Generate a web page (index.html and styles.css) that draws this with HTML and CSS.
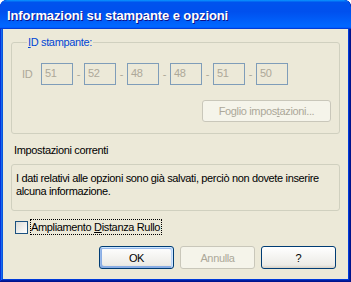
FILE: index.html
```html
<!DOCTYPE html>
<html>
<head>
<meta charset="utf-8">
<link rel="stylesheet" href="styles.css">
</head>
<body>
<div class="window">
  <div class="titlebar"><span class="title">Informazioni su stampante e opzioni</span></div>
  <div class="client">
    <fieldset class="group">
      <legend class="legend"><u>I</u>D stampante:</legend>
      <div class="idrow">
        <span class="idlabel">ID</span>
        <span class="edit">51</span><span class="sep">-</span>
        <span class="edit">52</span><span class="sep">-</span>
        <span class="edit">48</span><span class="sep">-</span>
        <span class="edit">48</span><span class="sep">-</span>
        <span class="edit">51</span><span class="sep">-</span>
        <span class="edit">50</span>
      </div>
      <div class="btnrow-right">
        <button class="btn btn-disabled btn-wide" disabled>Foglio impos<u>t</u>azioni...</button>
      </div>
    </fieldset>
    <div class="section-label">Impostazioni correnti</div>
    <div class="infobox">I dati relativi alle opzioni sono già salvati, perciò non dovete inserire alcuna informazione.</div>
    <div class="checkrow">
      <span class="checkbox"></span>
      <span class="checklabel">Ampliamento <u>D</u>istanza Rullo</span>
    </div>
    <div class="buttons">
      <button class="btn btn-default">OK</button>
      <button class="btn btn-disabled" disabled>Annulla</button>
      <button class="btn">?</button>
    </div>
  </div>
</div>
</body>
</html>
```
FILE: styles.css
```css
html, body {
  margin: 0;
  padding: 0;
  background: #ffffff;
}
body {
  font-family: "Liberation Sans", Arial, sans-serif;
  font-size: 11px;
  line-height: 13px;
  letter-spacing: -0.35px;
  color: #000000;
}
.window {
  width: 351px;
  height: 282px;
  display: flex;
  flex-direction: column;
  background: #0855dd;
  border-radius: 7px 7px 0 0;
  overflow: hidden;
  box-shadow: inset -1px -1px #00138c, inset 1px 1px #0831d9, inset -2px -2px #001ea0, inset 2px 2px #166aee, inset -3px -3px #003bda, inset 3px 3px #0855dd;
}
.titlebar {
  flex: none;
  height: 29px;
  display: flex;
  align-items: center;
  padding-left: 7px;
  background: linear-gradient(180deg, #0997ff, #0053ee 8%, #0050ee 40%, #0066ff 88%, #0066ff 93%, #005bff 95%, #003dd7 96%, #003dd7);
  border-radius: 7px 7px 0 0;
}
.title {
  font-family: "Liberation Sans", Arial, sans-serif;
  font-weight: bold;
  font-size: 13px;
  letter-spacing: -0.1px;
  color: #ffffff;
  text-shadow: 1px 1px #0f1089;
  padding-top: 1px;
}
.client {
  flex: 1;
  margin: 0 3px 3px;
  background: #ece9d8;
  padding: 7px 8px 0;
  display: flex;
  flex-direction: column;
}
.group {
  margin: 0;
  padding: 14px 8px 11px 10px;
  border: 1px solid #d0d0bf;
  border-radius: 3px;
  display: flex;
  flex-direction: column;
}
.legend {
  padding: 0 1px;
  margin-left: 5px;
  color: #0046d5;
}
.idrow {
  display: flex;
  align-items: center;
  color: #aca899;
}
.idlabel {
  width: 19px;
}
.edit {
  box-sizing: border-box;
  width: 32px;
  height: 22px;
  border: 1px solid #7f9db9;
  padding: 3px 0 0 3px;
  color: #aca899;
}
.sep {
  width: 11px;
  text-align: center;
}
.btnrow-right {
  display: flex;
  justify-content: flex-end;
  margin-top: 15px;
}
.btn {
  box-sizing: border-box;
  width: 75px;
  height: 23px;
  font-family: "Liberation Sans", Arial, sans-serif;
  font-size: 11px;
  letter-spacing: -0.35px;
  color: #000000;
  border: 1px solid #003c74;
  border-radius: 3px;
  background: linear-gradient(180deg, #ffffff, #ecebe6 86%, #d6d0c5);
  padding: 0;
}
.btn-wide {
  width: 129px;
  height: 22px;
}
.btn-disabled {
  border-color: #c9c7ba;
  background: #f5f4ea;
  color: #aca899;
}
.btn-default {
  box-shadow: inset -1px 1px #cee7ff, inset 1px 2px #98b8ea, inset -2px 2px #bcd4f6, inset 1px -1px #89ade4, inset 2px -2px #89ade4;
}
.section-label {
  margin: 10px 0 0 3px;
}
.infobox {
  margin-top: 7px;
  border: 1px solid #d0d0bf;
  border-radius: 3px;
  padding: 7px 4px 12px 4px;
}
.checkrow {
  display: flex;
  align-items: center;
  margin: 8px 0 0 4px;
}
.checkbox {
  box-sizing: border-box;
  width: 13px;
  height: 13px;
  border: 1px solid #1c5180;
  background: linear-gradient(135deg, #dcdcd7, #ffffff);
  margin-right: 2px;
}
.checklabel {
  border: 1px dotted #000000;
  padding: 1px 1px 0 0;
}
.buttons {
  display: flex;
  justify-content: flex-end;
  gap: 6px;
  margin: 11px 4px 0 0;
}
```
